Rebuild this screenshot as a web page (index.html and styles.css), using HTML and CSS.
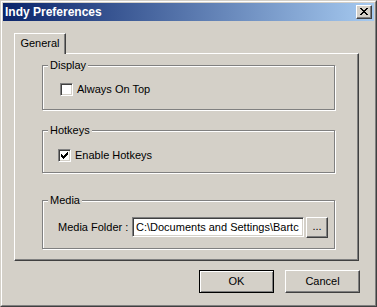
FILE: index.html
```html
<!DOCTYPE html>
<html>
<head>
<meta charset="utf-8">
<link rel="stylesheet" href="styles.css">
</head>
<body>
<div class="window">
  <div class="frame">
    <div class="titlebar">
      <span class="title">Indy Preferences</span>
      <div class="close">
        <svg width="8" height="7" viewBox="0 0 8 7" shape-rendering="crispEdges">
          <rect x="0" y="0" width="2" height="1"/><rect x="6" y="0" width="2" height="1"/>
          <rect x="1" y="1" width="2" height="1"/><rect x="5" y="1" width="2" height="1"/>
          <rect x="2" y="2" width="4" height="1"/>
          <rect x="3" y="3" width="2" height="1"/>
          <rect x="2" y="4" width="4" height="1"/>
          <rect x="1" y="5" width="2" height="1"/><rect x="5" y="5" width="2" height="1"/>
          <rect x="0" y="6" width="2" height="1"/><rect x="6" y="6" width="2" height="1"/>
        </svg>
      </div>
    </div>
    <div class="client">
      <div class="tabs">
        <div class="tab">General</div>
      </div>
      <div class="pane">
        <div class="group g-display">
          <div class="legend">Display</div>
          <div class="check check-display">
            <span class="box"></span>
            <span>Always On Top</span>
          </div>
        </div>
        <div class="group g-hotkeys">
          <div class="legend">Hotkeys</div>
          <div class="check check-hotkeys">
            <span class="box">
              <svg width="7" height="7" viewBox="0 0 7 7" shape-rendering="crispEdges">
                <rect x="6" y="0" width="1" height="1"/>
                <rect x="5" y="1" width="2" height="1"/>
                <rect x="0" y="2" width="1" height="1"/><rect x="4" y="2" width="3" height="1"/>
                <rect x="0" y="3" width="2" height="1"/><rect x="3" y="3" width="3" height="1"/>
                <rect x="0" y="4" width="5" height="1"/>
                <rect x="1" y="5" width="3" height="1"/>
                <rect x="2" y="6" width="1" height="1"/>
              </svg>
            </span>
            <span>Enable Hotkeys</span>
          </div>
        </div>
        <div class="group g-media">
          <div class="legend">Media</div>
          <div class="media-row">
            <span class="media-label">Media Folder :</span>
            <div class="field">C:\Documents and Settings\Bartc</div>
            <div class="browse">...</div>
          </div>
        </div>
      </div>
      <div class="buttons">
        <div class="btn default">OK</div>
        <div class="btn">Cancel</div>
      </div>
    </div>
  </div>
</div>
</body>
</html>
```

FILE: styles.css
```css
html, body {
  margin: 0;
  padding: 0;
  background: #D4D0C8;
}

body {
  font-family: "Liberation Sans", Arial, sans-serif;
  font-size: 11px;
  color: #000;
}

.window {
  width: 377px;
  height: 307px;
  box-sizing: border-box;
  border: 1px solid;
  border-color: #D4D0C8 #404040 #404040 #D4D0C8;
  background: #D4D0C8;
}

.frame {
  height: 100%;
  box-sizing: border-box;
  border: 1px solid;
  border-color: #FFFFFF #808080 #808080 #FFFFFF;
  padding: 1px;
}

.titlebar {
  height: 18px;
  display: flex;
  align-items: center;
  justify-content: space-between;
  padding: 0 2px;
  background: linear-gradient(to right, #0A246A, #A6CAF0);
  color: #fff;
}

.title {
  font-weight: bold;
  font-size: 12px;
  line-height: 18px;
}

.close {
  width: 16px;
  height: 14px;
  box-sizing: border-box;
  border: 1px solid;
  border-color: #FFFFFF #404040 #404040 #FFFFFF;
  box-shadow: inset -1px -1px #808080;
  background: #D4D0C8;
  display: flex;
  padding: 2px 0 0 3px;
}

.close svg {
  display: block;
  fill: #000;
}

.client {
  padding: 12px 15px 0 11px;
}

.tabs {
  display: flex;
  height: 20px;
}

.tab {
  position: relative;
  z-index: 1;
  width: 52px;
  height: 21px;
  margin-bottom: -1px;
  box-sizing: border-box;
  border-top: 1px solid #FFFFFF;
  border-left: 1px solid #FFFFFF;
  border-right: 1px solid #404040;
  box-shadow: inset -1px 0 #808080;
  background: #D4D0C8;
  text-align: center;
  line-height: 17px;
  padding-top: 1px;
}

.pane {
  height: 208px;
  box-sizing: border-box;
  border: 1px solid;
  border-color: #FFFFFF #404040 #404040 #FFFFFF;
  box-shadow: inset -1px -1px #808080;
  padding: 11px 0 0 27px;
}

.group {
  width: 293px;
  box-sizing: border-box;
  border: 1px solid #808080;
  box-shadow: inset 1px 1px #FFFFFF, 1px 1px #FFFFFF;
}

.g-display {
  height: 45px;
}

.g-hotkeys {
  height: 43px;
  margin-top: 20px;
}

.g-media {
  height: 49px;
  margin-top: 27px;
}

.legend {
  width: fit-content;
  margin: -7px 0 0 5px;
  padding: 0 2px;
  background: #D4D0C8;
  line-height: 13px;
}

.check {
  display: flex;
  align-items: center;
  gap: 4px;
  height: 13px;
  line-height: 13px;
}

.check-display {
  margin: 11px 0 0 17px;
}

.check-hotkeys {
  margin: 12px 0 0 15px;
}

.box {
  width: 13px;
  height: 13px;
  box-sizing: border-box;
  border: 1px solid;
  border-color: #808080 #FFFFFF #FFFFFF #808080;
  box-shadow: inset 1px 1px #404040, inset -1px -1px #D4D0C8;
  background: #FFFFFF;
  padding: 2px 0 0 2px;
  flex: none;
}

.box svg {
  display: block;
  fill: #000;
}

.media-row {
  display: flex;
  align-items: center;
  margin: 10px 0 0 15px;
  height: 20px;
}

.media-label {
  width: 74px;
  flex: none;
}

.field {
  width: 172px;
  height: 20px;
  box-sizing: border-box;
  border: 1px solid;
  border-color: #808080 #FFFFFF #FFFFFF #808080;
  box-shadow: inset 1px 1px #404040, inset -1px -1px #D4D0C8;
  background: #FFFFFF;
  padding: 0 2px 0 3px;
  line-height: 18px;
  white-space: nowrap;
  overflow: hidden;
  flex: none;
}

.browse {
  width: 22px;
  height: 21px;
  margin-left: 2px;
  box-sizing: border-box;
  border: 1px solid;
  border-color: #FFFFFF #404040 #404040 #FFFFFF;
  box-shadow: inset -1px -1px #808080;
  text-align: center;
  line-height: 17px;
  flex: none;
}

.buttons {
  display: flex;
  justify-content: flex-end;
  gap: 11px;
  margin: 9px -1px 0 0;
}

.btn {
  width: 75px;
  height: 23px;
  box-sizing: border-box;
  border: 1px solid;
  border-color: #FFFFFF #404040 #404040 #FFFFFF;
  box-shadow: inset -1px -1px #808080;
  text-align: center;
  line-height: 21px;
}

.btn.default {
  border-color: #000000;
  box-shadow: inset 1px 1px #FFFFFF, inset -1px -1px #808080;
}
```
